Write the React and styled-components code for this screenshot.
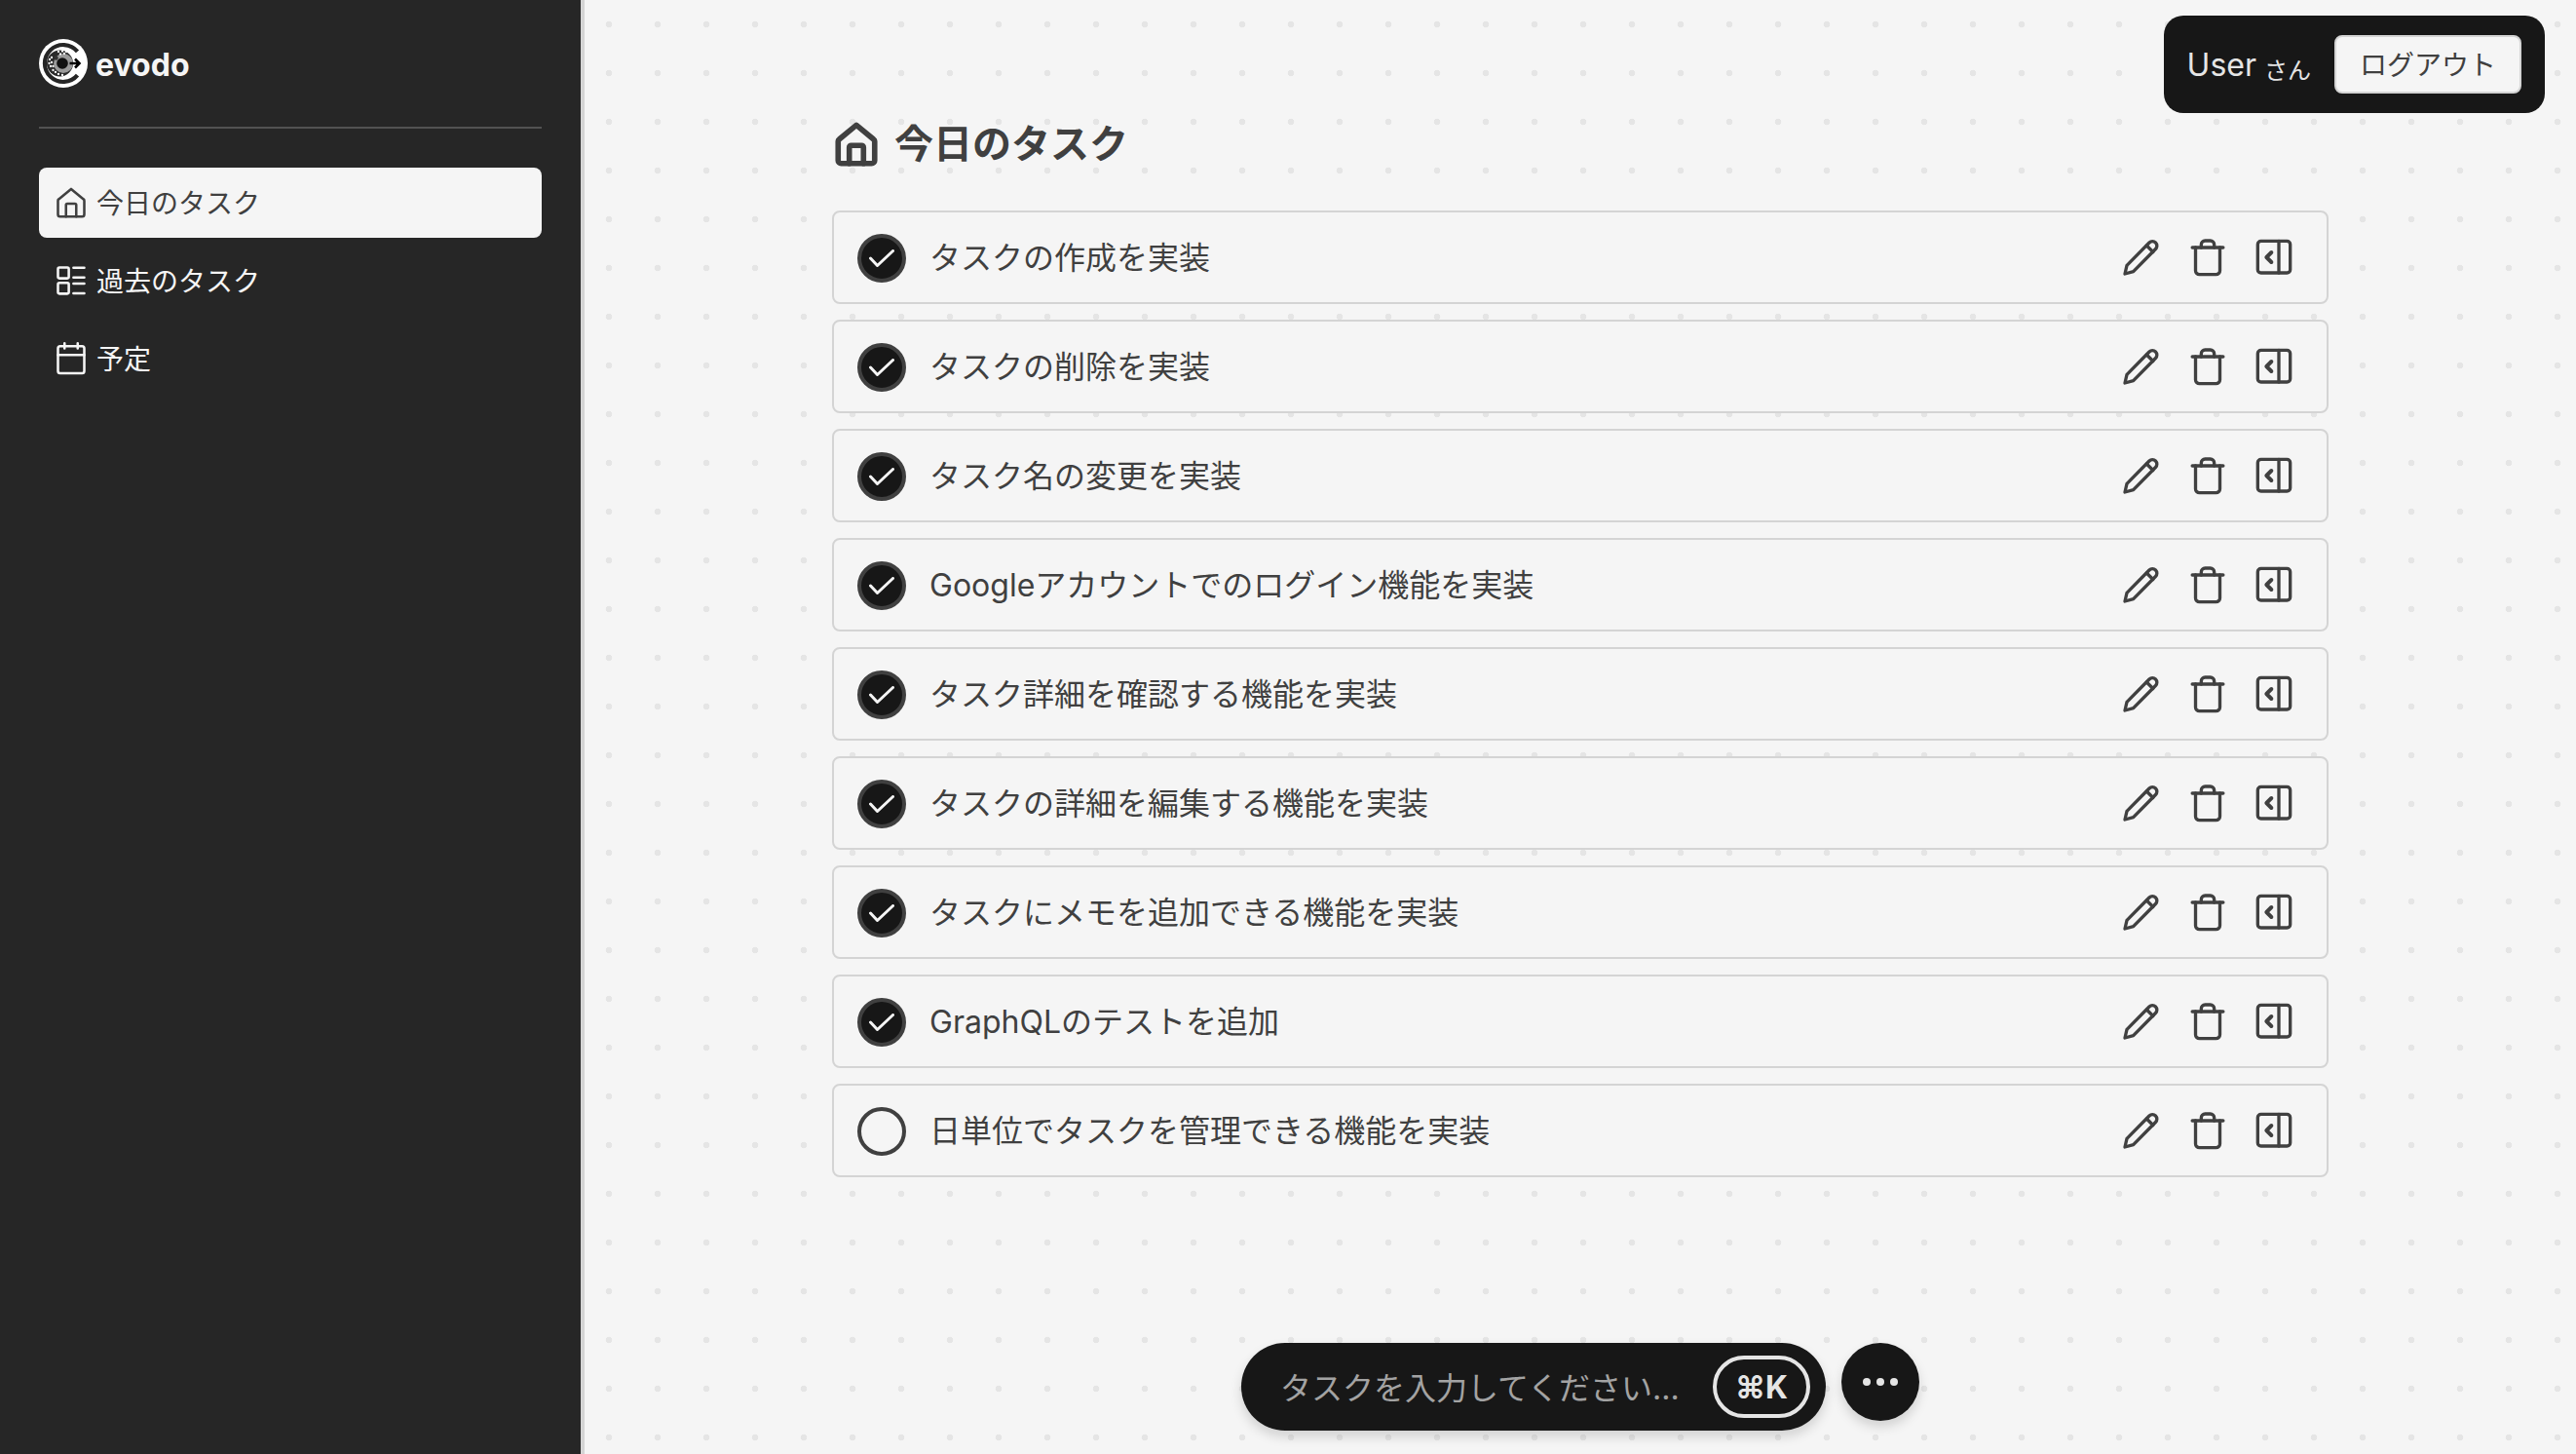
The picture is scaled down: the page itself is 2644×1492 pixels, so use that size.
import React from "react";
import styled, { createGlobalStyle } from "styled-components";

const Global = createGlobalStyle`
  html, body { margin: 0; padding: 0; height: 100%; }
  body { font-family: Inter, "Noto Sans CJK JP", "Noto Sans", sans-serif; background: #f5f5f5; }
  #root { height: 100%; }
  * { box-sizing: border-box; }
`;

const Shell = styled.div`
  display: flex;
  height: 100vh;
  overflow: hidden;
`;

const Sidebar = styled.aside`
  flex: 0 0 600px;
  background: #262626;
  border-right: 4px solid #d4d4d4;
  padding: 40px 40px 0;
`;

const Brand = styled.div`
  display: flex;
  align-items: center;
  gap: 8px;
  height: 50px;
`;

const BrandName = styled.span`
  padding-top: 2px;
  font-size: 32px;
  font-weight: 700;
  color: #f5f5f5;
`;

const Divider = styled.hr`
  border: 0;
  height: 2px;
  background: #525252;
  margin: 40px 0;
`;

const Nav = styled.nav`
  display: flex;
  flex-direction: column;
  gap: 8px;
`;

const NavItem = styled.a`
  display: flex;
  align-items: center;
  gap: 8px;
  height: 72px;
  padding: 0 16px 0 15px;
  border-radius: 8px;
  font-size: 28px;
  background: ${(p) => (p.$active ? "#f5f5f5" : "transparent")};
  color: ${(p) => (p.$active ? "#404040" : "#f5f5f5")};
`;

const NavLabel = styled.span`
  padding-bottom: 3px;
`;

const Main = styled.main`
  position: relative;
  flex: 1;
  display: flex;
  flex-direction: column;
  align-items: center;
  padding-top: 120px;
  background-color: #f5f5f5;
  background-image: radial-gradient(circle at center, #e5e5e5 3px, transparent 3.6px);
  background-size: 50px 50px;
  background-position: 0 0;
`;

const Content = styled.div`
  width: 1536px;
`;

const Title = styled.h1`
  display: flex;
  align-items: center;
  gap: 14px;
  height: 56px;
  margin: 0 0 40px;
  font-size: 40px;
  font-weight: 700;
  color: #404040;
`;

const TitleText = styled.span`
  padding-bottom: 6px;
`;

const List = styled.ul`
  display: flex;
  flex-direction: column;
  gap: 16px;
  margin: 0;
  padding: 0;
  list-style: none;
`;

const Row = styled.li`
  display: flex;
  align-items: center;
  height: 96px;
  padding: 0 34px 0 24px;
  background: #f5f5f5;
  border: 2px solid #d4d4d4;
  border-radius: 8px;
`;

const Check = styled.span`
  flex: 0 0 50px;
  display: flex;
  align-items: center;
  justify-content: center;
  width: 50px;
  height: 50px;
  margin-top: 1px;
  border-radius: 50%;
  border: 4px solid #404040;
  background: ${(p) => (p.$done ? "#171717" : "transparent")};
`;

const TaskName = styled.span`
  flex: 1;
  margin-left: 24px;
  padding-bottom: 5px;
  font-size: 32px;
  color: #404040;
`;

const Actions = styled.div`
  display: flex;
  gap: 28px;
`;

const UserPanel = styled.div`
  position: absolute;
  top: 16px;
  right: 32px;
  display: flex;
  align-items: center;
  gap: 24px;
  height: 100px;
  padding: 0 24px;
  border-radius: 20px;
  background: #171717;
  color: #e5e5e5;
`;

const UserName = styled.span`
  padding-top: 2px;
  font-size: 32px;
`;

const Honorific = styled.span`
  font-size: 24px;
  margin-left: 8px;
  vertical-align: -3px;
`;

const Logout = styled.button`
  width: 192px;
  height: 60px;
  padding: 0 0 3px;
  border: 2px solid #d4d4d4;
  border-radius: 8px;
  background: #f5f5f5;
  color: #404040;
  font: inherit;
  font-size: 28px;
`;

const Dock = styled.div`
  position: absolute;
  bottom: 24px;
  left: 50%;
  transform: translateX(-50%);
  display: flex;
  align-items: flex-start;
  gap: 16px;
`;

const Prompt = styled.div`
  display: flex;
  align-items: center;
  justify-content: space-between;
  width: 600px;
  height: 90px;
  padding: 0 16px 0 40px;
  border-radius: 45px;
  background: #171717;
  box-shadow: 0 6px 12px rgba(0, 0, 0, 0.15);
`;

const Placeholder = styled.span`
  padding-bottom: 2px;
  font-size: 32px;
  color: #a3a3a3;
`;

const Kbd = styled.kbd`
  display: flex;
  align-items: center;
  justify-content: center;
  width: 100px;
  height: 64px;
  border: 4px solid #e5e5e5;
  border-radius: 32px;
  font-family: Inter, "DejaVu Sans", sans-serif;
  font-size: 32px;
  font-weight: 700;
  color: #e5e5e5;
`;

const Round = styled.button`
  display: flex;
  align-items: center;
  justify-content: center;
  width: 80px;
  height: 80px;
  padding: 0;
  border: 0;
  border-radius: 50%;
  background: #171717;
  box-shadow: 0 6px 12px rgba(0, 0, 0, 0.15);
`;

const Glyph = ({ size = 40, sw = 2, children }) => (
  <svg width={size} height={size} viewBox="0 0 24 24" fill="none" stroke="currentColor" strokeWidth={sw} strokeLinecap="round" strokeLinejoin="round" style={{ flex: "none", color: "#404040", display: "block" }}>
    {children}
  </svg>
);

const NavGlyph = styled.svg`
  flex: none;
  width: 36px;
  height: 36px;
  fill: none;
  stroke: currentColor;
  stroke-width: 1.7;
  stroke-linecap: round;
  stroke-linejoin: round;
`;

const HomePath = () => (
  <>
    <path d="M3 20V10.6c0-.4.2-.8.5-1L12 2.6l8.5 7c.3.2.5.6.5 1V20a1.5 1.5 0 0 1-1.5 1.5h-15A1.5 1.5 0 0 1 3 20Z" />
    <path d="M8.5 21.5V13.5c0-.5.4-.9.9-.9h5.2c.5 0 .9.4.9.9v8" />
  </>
);

const Logo = () => (
  <svg width="50" height="50" viewBox="0 0 50 50" style={{ flex: "none" }}>
    <circle cx="25" cy="25" r="25" fill="#fff" />
    <path d="M39.5 12.8A19 19 0 1 0 39.5 37.2" fill="none" stroke="#262626" strokeWidth="4.2" />
    <circle cx="21.5" cy="25" r="13.5" fill="#2a2a2a" />
    <circle cx="25" cy="25" r="10" fill="#9a9a9a" />
    <circle cx="24" cy="25" r="5.8" fill="#111" />
    <circle cx="17.5" cy="19.5" r="2.2" fill="#333" />
    {[[11, 21], [13, 19], [10.5, 25], [13, 24], [12, 28], [14.5, 28], [14.5, 32], [17, 34], [20, 36], [24, 37], [20, 13], [24, 12.5], [28, 13], [22, 15.5], [26, 15]].map(([x, y]) => (
      <circle key={`${x}-${y}`} cx={x} cy={y} r="1.15" fill="#fff" />
    ))}
    <path d="M31.5 25h10M37 20.5l4.5 4.5-4.5 4.5" fill="none" stroke="#000" strokeWidth="2.6" />
  </svg>
);

const tasks = [
  ["タスクの作成を実装", true],
  ["タスクの削除を実装", true],
  ["タスク名の変更を実装", true],
  ["Googleアカウントでのログイン機能を実装", true],
  ["タスク詳細を確認する機能を実装", true],
  ["タスクの詳細を編集する機能を実装", true],
  ["タスクにメモを追加できる機能を実装", true],
  ["GraphQLのテストを追加", true],
  ["日単位でタスクを管理できる機能を実装", false],
];

export default function App() {
  return (
    <Shell>
      <Global />
      <Sidebar>
        <Brand>
          <Logo />
          <BrandName>evodo</BrandName>
        </Brand>
        <Divider />
        <Nav>
          <NavItem $active>
            <NavGlyph viewBox="0 0 24 24"><HomePath /></NavGlyph>
            <NavLabel>今日のタスク</NavLabel>
          </NavItem>
          <NavItem>
            <NavGlyph viewBox="0 0 24 24">
              <rect x="3" y="3" width="7.4" height="7.4" rx="1" />
              <rect x="3" y="13.5" width="7.4" height="7.4" rx="1" />
              <path d="M13.6 3.2h7.4M13.6 9.8h7.4M13.6 14h7.4M13.6 20.6h7.4" />
            </NavGlyph>
            <NavLabel>過去のタスク</NavLabel>
          </NavItem>
          <NavItem>
            <NavGlyph viewBox="0 0 24 24">
              <rect x="3" y="3.5" width="18" height="18.5" rx="1.5" />
              <path d="M3 9.5h18M7.5 1.5v3.5M16.5 1.5v3.5" />
            </NavGlyph>
            <NavLabel>予定</NavLabel>
          </NavItem>
        </Nav>
      </Sidebar>
      <Main>
        <UserPanel>
          <UserName>User<Honorific>さん</Honorific></UserName>
          <Logout>ログアウト</Logout>
        </UserPanel>
        <Content>
          <Title>
            <Glyph size={50} sw={2.7}><HomePath /></Glyph>
            <TitleText>今日のタスク</TitleText>
          </Title>
          <List>
            {tasks.map(([name, done]) => (
              <Row key={name}>
                <Check $done={done}>
                  {done && (
                    <svg width="26" height="18" viewBox="0 0 26 18" fill="none" stroke="#f5f5f5" strokeWidth="3" strokeLinecap="round" strokeLinejoin="round">
                      <path d="M1.5 9l7 7.5L24.5 1.5" />
                    </svg>
                  )}
                </Check>
                <TaskName>{name}</TaskName>
                <Actions>
                  <Glyph>
                    <path d="M1.8 22.2l1.2-5.2L16.8 3a2.7 2.7 0 0 1 3.9 3.9L7 20.8Z" />
                    <path d="M15.2 4.8l3.9 3.9" />
                  </Glyph>
                  <Glyph>
                    <path d="M2.5 6h19" />
                    <path d="M4.5 6v14.2a2.4 2.4 0 0 0 2.4 2.4h10.2a2.4 2.4 0 0 0 2.4-2.4V6" />
                    <path d="M8 6V4.2A2.4 2.4 0 0 1 10.4 1.8h3.2A2.4 2.4 0 0 1 16 4.2V6" />
                  </Glyph>
                  <Glyph>
                    <rect x="2" y="2" width="20" height="19.6" rx="2" />
                    <path d="M15 2v19.6" />
                    <path d="M10.4 9l-3 3 3 3" strokeWidth="2.4" />
                  </Glyph>
                </Actions>
              </Row>
            ))}
          </List>
        </Content>
        <Dock>
          <Prompt>
            <Placeholder>タスクを入力してください...</Placeholder>
            <Kbd>⌘K</Kbd>
          </Prompt>
          <Round aria-label="more">
            <svg width="36" height="8" viewBox="0 0 36 8" fill="#e5e5e5">
              <circle cx="4" cy="4" r="4" />
              <circle cx="18" cy="4" r="4" />
              <circle cx="32" cy="4" r="4" />
            </svg>
          </Round>
        </Dock>
      </Main>
    </Shell>
  );
}
